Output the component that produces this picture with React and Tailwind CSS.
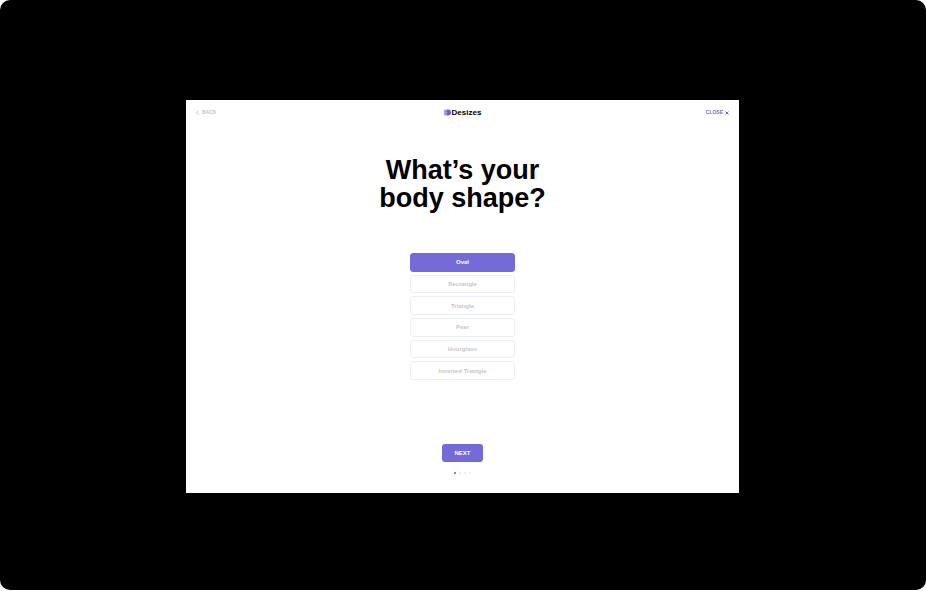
import { useState } from "react";

const SHAPES = ["Oval", "Rectangle", "Triangle", "Pear", "Hourglass", "Inverted Triangle"];
const STEPS = [0, 1, 2, 3];

function Logo() {
  return (
    <svg className="h-[7px] w-[7px]" viewBox="0 0 14 14" aria-hidden="true">
      <path d="M0 1h7v12H0z" fill="#aaa4f0" />
      <path d="M6 1h2a6 6 0 0 1 0 12H6z" fill="#6a5cd8" />
      <path d="M2 4h5v2H2zM2 8h5v2H2z" fill="#7f74e0" />
    </svg>
  );
}

function Header() {
  return (
    <header className="grid grid-cols-3 items-center px-[10px] pt-[7px]">
      <button type="button" className="flex h-[11px] items-center gap-[3px] justify-self-start text-[5px] leading-none font-bold text-[#c3c4ce]">
        <svg className="h-[5px] w-[3px]" viewBox="0 0 6 10" fill="none" stroke="currentColor" strokeWidth="2" aria-hidden="true">
          <path d="M5 1 1 5l4 4" />
        </svg>
        BACK
      </button>
      <a href="#" className="flex h-[11px] items-center gap-px justify-self-center text-[8px] leading-none font-bold text-black">
        <Logo />
        Desizes
      </a>
      <button type="button" className="flex h-[11px] items-center gap-[2px] justify-self-end text-[5px] leading-none font-bold text-[#7568dc]">
        CLOSE
        <svg className="h-[4px] w-[4px]" viewBox="0 0 8 8" fill="none" stroke="currentColor" strokeWidth="2" aria-hidden="true">
          <path d="m1 1 6 6M7 1 1 7" />
        </svg>
      </button>
    </header>
  );
}

export default function App() {
  const [selected, setSelected] = useState("Oval");

  return (
    <div className="min-h-screen bg-white pb-px font-['Liberation_Sans',Arial,sans-serif]">
      <div className="flex min-h-[calc(100vh-1px)] flex-col items-center justify-center rounded-[10px] bg-black pt-[3px] pr-px">
        <main className="w-full max-w-[553px] bg-white pb-[19px]">
          <Header />
          <h1 className="mt-[38px] text-center text-[27px] leading-[28px] font-bold text-black">
            What’s your
            <br />
            body shape?
          </h1>
          <div className="mx-auto mt-[41px] flex h-[127px] w-[105px] flex-col gap-[3px]" role="group" aria-label="Body shape">
            {SHAPES.map((shape) => (
              <button
                key={shape}
                type="button"
                aria-pressed={selected === shape}
                onClick={() => setSelected(shape)}
                className={
                  selected === shape
                    ? "flex-1 rounded-[3px] border border-[#756bd8] bg-[#756bd8] text-[6px] leading-none font-bold text-white"
                    : "flex-1 rounded-[3px] border border-[#eceff5] bg-white text-[6px] leading-none font-bold text-[#c5c7ce]"
                }
              >
                {shape}
              </button>
            ))}
          </div>
          <div className="mt-[64px] flex flex-col items-center gap-[10px]">
            <button type="button" className="h-[18px] w-[41px] rounded-[3px] bg-[#756bd8] text-[6px] leading-none font-bold text-white">
              NEXT
            </button>
            <div className="flex gap-[3px]" aria-hidden="true">
              {STEPS.map((step) => (
                <span key={step} className={step === 0 ? "size-[2px] rounded-full bg-[#6556dc]" : "size-[2px] rounded-full bg-[#e3e4ef]"} />
              ))}
            </div>
          </div>
        </main>
      </div>
    </div>
  );
}
